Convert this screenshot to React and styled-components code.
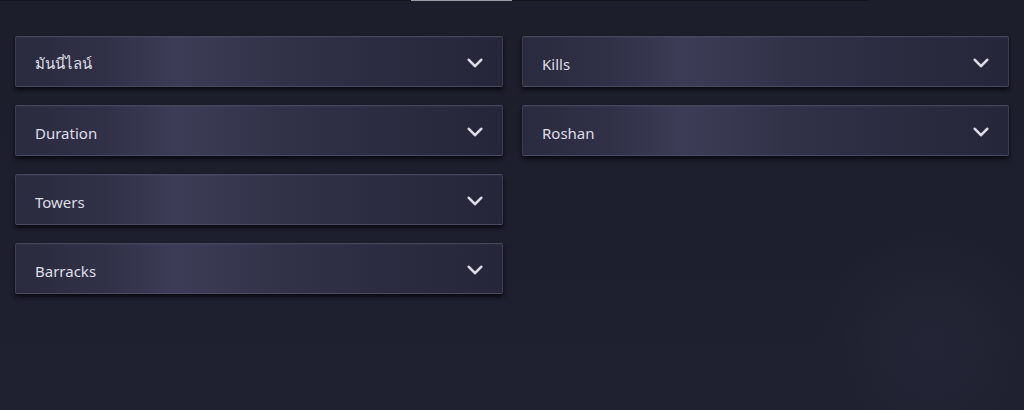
import React from 'react'
import styled, { createGlobalStyle } from 'styled-components'

const GlobalStyle = createGlobalStyle`
  html, body {
    margin: 0;
    padding: 0;
    background: #1e1f2d;
  }
  body {
    font-family: 'Noto Sans', 'Open Sans', sans-serif;
  }
`

const Page = styled.div`
  position: relative;
  width: 1024px;
  height: 410px;
  overflow: hidden;
  background:
    radial-gradient(circle at 930px 340px, rgba(60, 62, 88, 0.16) 0, rgba(60, 62, 88, 0) 110px),
    linear-gradient(180deg, #1d1e2b 0%, #1f2030 100%);
`

const TopLine = styled.div`
  display: flex;
  height: 1px;
`

const LineSegment = styled.div`
  width: ${(p) => p.$w}px;
  background: ${(p) => p.$color};
`

const Grid = styled.div`
  display: grid;
  grid-template-columns: 488px 487px;
  column-gap: 19px;
  padding: 35px 0 0 15px;
  align-items: start;
`

const Column = styled.div`
  display: flex;
  flex-direction: column;
  gap: 18px;
`

const Dropdown = styled.div`
  height: 51px;
  box-sizing: border-box;
  display: flex;
  align-items: center;
  justify-content: space-between;
  padding: 4px 19px 0 19px;
  border: 1px solid #3c3d52;
  border-top-color: #45465c;
  border-bottom-color: #4a4b62;
  border-radius: 2px;
  background: linear-gradient(
    90deg,
    #2b2b3f 0%,
    #303047 18%,
    #3c3c56 33%,
    #393952 40%,
    #313148 55%,
    #2a2b3f 80%,
    #25263a 100%
  );
  box-shadow: 0 3px 4px rgba(6, 6, 12, 0.85), inset 0 1px 0 rgba(255, 255, 255, 0.04);
  cursor: pointer;
`

const Label = styled.span`
  color: #dedee6;
  font-size: 15px;
  font-weight: 400;
`

const Chevron = () => (
  <svg width="16" height="11" viewBox="0 0 16 11" fill="none">
    <path d="M1.8 1.8 L8 8.2 L14.2 1.8" stroke="#dcdce4" strokeWidth="2.6" strokeLinecap="round" strokeLinejoin="round" />
  </svg>
)

const Select = ({ label }) => (
  <Dropdown>
    <Label>{label}</Label>
    <Chevron />
  </Dropdown>
)

const leftFilters = ['มันนี่ไลน์', 'Duration', 'Towers', 'Barracks']
const rightFilters = ['Kills', 'Roshan']

const App = () => (
  <Page>
    <GlobalStyle />
    <TopLine>
      <LineSegment $w={411} $color="#15151f" />
      <LineSegment $w={101} $color="#9b9ba3" />
      <LineSegment $w={357} $color="#14141d" />
    </TopLine>
    <Grid>
      <Column>
        {leftFilters.map((f) => (
          <Select key={f} label={f} />
        ))}
      </Column>
      <Column>
        {rightFilters.map((f) => (
          <Select key={f} label={f} />
        ))}
      </Column>
    </Grid>
  </Page>
)

export default App
